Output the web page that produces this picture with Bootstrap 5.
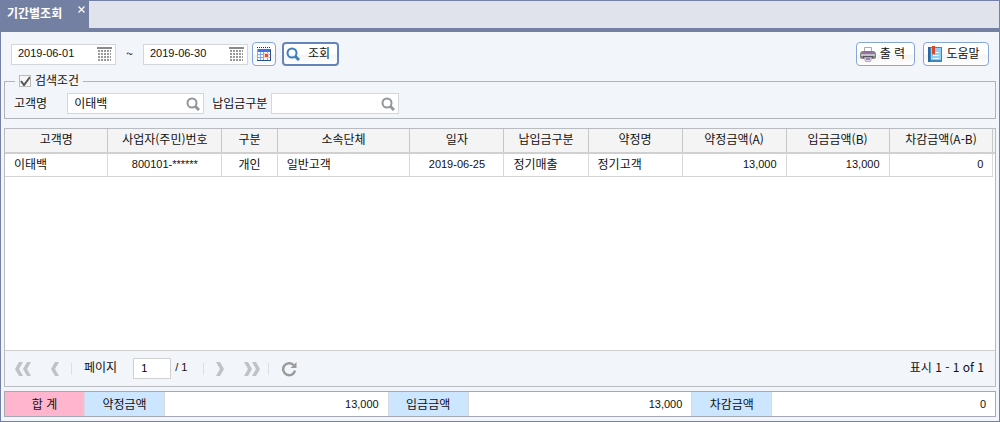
<!DOCTYPE html>
<html lang="ko">
<head>
<meta charset="utf-8">
<meta name="viewport" content="width=device-width, initial-scale=1">
<title>기간별조회</title>
<link href="https://cdn.jsdelivr.net/npm/bootstrap@5.3.0/dist/css/bootstrap.min.css" rel="stylesheet">
<style>
  body { font: 12px/16px "Noto Sans CJK KR", sans-serif; color: #111; background: #f2f5fa; }
  .num { font-family: "Liberation Sans", "Noto Sans CJK KR", sans-serif; font-size: 11px; }
  .frame { border: 1px solid #7480a6; }
  .tabstrip { height: 31px; background: #e0e3ec; border-bottom: 4px solid #7480a2; }
  .tabstrip .page-tab { height: 31px; width: 88px; background: #7480a2; color: #fff; font-weight: 700; padding: 4px 4px 0 6px; }
  .tab-close { border: 0; background: none; color: #fff; padding: 1px 0 0; line-height: 0; }
  .tab-close svg, .tool svg, .field svg, .pager svg { display: block; flex: none; }
  .toolbar { padding: 10px 10px 8px; }
  .field { background: #fff; border: 1px solid #d3d6da; height: 21px; padding: 0 3px 0 6px; }
  .field input { border: 0; outline: 0; background: none; padding: 0 0 2px; min-width: 0; width: 100%; color: #111; line-height: 16px; }
  .date-field { width: 105px; }
  .tilde { width: 27px; text-align: center; padding-bottom: 2px; }
  .icon-btn { border: 0; background: none; padding: 0; }
  .tool { height: 24px; border: 1px solid #86a5d8; border-radius: 4px; background: linear-gradient(#fff 50%, #f4f4f4 55%, #fff); color: #111; padding: 0 5px 0 3px; font-size: 12px; line-height: 16px; }
  .tool span { padding-bottom: 2px; }
  .tool.main { border: 2px solid #6485b9; margin-left: 6px; padding: 0 7px 0 2px; }
  .tool.square { padding: 0 3px; }
  .search-box { margin: 0 3px; padding: 0 9px 4px; border: 1px solid #b1b5b9; }
  .search-box legend { font-size: 12px; line-height: 16px; padding: 0 4px; margin: 0 0 1px 1px; }
  .search-box legend span { margin-top: -2px; }
  .search-box .form-check-input { width: 12px; height: 12px; margin: 1px 0 0; border: 1px solid #bbb; border-radius: 0; background-color: #f6f6f6; }
  .search-box .form-check-input:checked { background-size: 14px; background-image: url("data:image/svg+xml,%3csvg xmlns='http://www.w3.org/2000/svg' viewBox='0 0 14 14'%3e%3cpath d='M3 7l3 4 6-8' fill='none' stroke='%23555' stroke-width='2'/%3e%3c/svg%3e"); }
  .search-box .caption { padding-bottom: 2px; }
  .name-field { width: 137px; }
  .kind-field { width: 128px; }
  .result { margin: 9px 3px 0; border: 1px solid #b8bbc0; background: #fff; }
  .grid-table { table-layout: fixed; width: 100%; margin: 0; }
  .grid-table th { height: 24px; background: #f4f4f4; font-weight: 400; text-align: center; padding: 0 0 3px; border-right: 1px solid #c5c7ca; border-bottom: 2px solid #d0d0d0; }
  .grid-table td { height: 23px; padding: 0 9px 2px; border-right: 1px solid #d9d9d9; border-bottom: 1px solid #d5d5d5; white-space: nowrap; }
  .grid-table th.edge, .grid-table td.edge { border-right: 0; padding: 0; }
  .grid-table td.edge { border-bottom: 0; }
  .pager { height: 36px; background: #f2f5fa; border-top: 1px solid #cfcfcf; padding: 0 11px 0 10px; }
  .pager .txt { padding-bottom: 3px; }
  .pager .nav-btn { width: 20px; height: 20px; }
  .pager .bar { width: 1px; height: 12px; background: #dcdfe4; }
  .pager .page-no { width: 38px; height: 21px; border: 1px solid #d0d0d0; border-radius: 0; background: #fff; padding: 0 0 2px 7px; }
  .totals { margin: 4px 3px; border: 1px solid #a5a8b2; background: #fff; height: 26px; }
  .totals .cap { width: 80px; flex: none; background: #cce6ff; border-right: 1px solid #d6dae0; height: 100%; padding-bottom: 1px; }
  .totals .cap.pink { background: #ffb5cd; }
  .totals .val { flex: 1 1 0; padding: 0 9px; text-align: right; border-right: 1px solid #d6dae0; height: 100%; line-height: 24px; }
  .totals .val:last-child { border: 0; }
</style>
</head>
<body>
<svg width="0" height="0" class="position-absolute" aria-hidden="true">
  <symbol id="cal" viewBox="0 0 15 14"><path d="M0 1h15" stroke="#8b8b8b" stroke-width="2"/><path d="M1 4h13M1 7h13M1 10h13M1 13h13" stroke="#999" stroke-width="2" stroke-dasharray="2 1"/></symbol>
  <symbol id="lens" viewBox="0 0 14 14"><circle cx="6" cy="6" r="4.500" fill="none" stroke="currentColor" stroke-width="2"/><path d="M9 9l4 4" stroke="currentColor" stroke-width="3"/></symbol>
  <symbol id="chev" viewBox="0 0 8 14"><path d="M0 7L4 0h4L4 7l4 7H4z" fill="#bfc2c6"/></symbol>
</svg>
<div class="frame d-flex flex-column min-vh-100">
  <header class="tabstrip d-flex">
    <div class="page-tab d-flex justify-content-between align-items-start">
      <span>기간별조회</span>
      <button class="tab-close" aria-label="닫기"><svg width="7" height="7" viewBox="0 0 7 7"><path d="M.5.5l6 6M6.500.5l-6 6" stroke="#fff" stroke-width="1.200"/></svg></button>
    </div>
  </header>

  <main class="d-flex flex-column flex-grow-1">
    <div class="toolbar d-flex align-items-center">
      <div class="field date-field d-flex align-items-center">
        <input class="num" type="text" value="2019-06-01" aria-label="시작일">
        <button class="icon-btn" aria-label="달력"><svg width="15" height="14"><use href="#cal"/></svg></button>
      </div>
      <span class="tilde">~</span>
      <div class="field date-field d-flex align-items-center">
        <input class="num" type="text" value="2019-06-30" aria-label="종료일">
        <button class="icon-btn" aria-label="달력"><svg width="15" height="14"><use href="#cal"/></svg></button>
      </div>
      <button class="tool square d-flex align-items-center ms-1" aria-label="기간 선택">
        <svg width="16" height="16" viewBox="0 0 16 16"><path fill="#fff" d="M1 2h14v13H1z"/><path fill="#3f75df" d="M1 3h14v3H1z"/><path d="M1 1.500h14" stroke="#333" stroke-dasharray="1 1"/><path d="M1 8.500h14M1 11.500h14M4.500 6v8M7.500 6v8M11.500 6v8M1.500 3v12" stroke="#85aaf0"/><path d="M1 14.500h14M14.500 4v10" stroke="#244f91"/><path fill="#fbd0bf" d="M8 7h5v5H8z"/><path fill="#e8502d" d="M9 8h3v3H9z"/></svg>
      </button>
      <button class="tool main d-flex align-items-center gap-2">
        <svg width="14" height="14" style="color:#3e7fbd"><use href="#lens"/></svg><span>조회</span>
      </button>
      <button class="tool d-flex align-items-center ms-auto me-2 gap-1">
        <svg width="16" height="16" viewBox="0 0 16 16"><path fill="#fff" stroke="#aaa" d="M4.500 1.500h7v5h-7z"/><path fill="#84818b" d="M2 5h2v2h8V5h2l2 2v5l-2 1H2l-2-1V7z"/><path fill="#c3c1c8" d="M1 8h14v2H1z"/><path fill="#976aa6" d="M4 5h8v2H4z"/><path fill="#555" d="M3 10h10v2H3z"/><path fill="#e9dff1" stroke="#aaa" d="M4.500 11.500h7l-1 4h-5z"/><path fill="#a379c5" d="M6 12h4v2H6z"/></svg><span>출 력&nbsp;</span>
      </button>
      <button class="tool d-flex align-items-center gap-1">
        <svg width="16" height="16" viewBox="0 0 16 16"><path fill="#3b87b8" d="M1 1h14v15H1z"/><path fill="#8fd1f4" d="M4 2h10v12H4z"/><path fill="#2867a1" d="M1 1h2v15H1z"/><path fill="#e4f6ff" d="M6 6h6v1H6zM6 9h6v1H6zM6 12h6v1H6z"/><path fill="#e04425" d="M5 0h3v9L6.500 7.500 5 9z"/></svg><span>도움말&nbsp;</span>
      </button>
    </div>

    <fieldset class="search-box">
      <legend class="float-none w-auto"><label class="d-flex gap-1"><input class="form-check-input" type="checkbox" checked><span>검색조건</span></label></legend>
      <div class="d-flex align-items-center pt-1">
        <label for="cust" class="caption me-3 pe-1">고객명</label>
        <div class="field name-field d-flex align-items-center">
          <input id="cust" type="text" value="이태백">
          <button class="icon-btn text-secondary opacity-75" aria-label="고객 찾기"><svg width="14" height="14"><use href="#lens"/></svg></button>
        </div>
        <label for="kind" class="caption ms-2 me-1">납입금구분</label>
        <div class="field kind-field d-flex align-items-center">
          <input id="kind" type="text">
          <button class="icon-btn text-secondary opacity-75" aria-label="구분 찾기"><svg width="14" height="14"><use href="#lens"/></svg></button>
        </div>
      </div>
    </fieldset>

    <section class="result d-flex flex-column flex-grow-1">
      <div class="flex-grow-1">
        <table class="grid-table">
          <colgroup>
            <col style="width:10.4%"><col style="width:11.5%"><col style="width:5.6%"><col style="width:13.4%"><col style="width:9.5%"><col style="width:8.5%"><col style="width:9.5%"><col style="width:10.5%"><col style="width:10.4%"><col style="width:10.5%"><col>
          </colgroup>
          <thead>
            <tr><th>고객명</th><th>사업자(주민)번호</th><th>구분</th><th>소속단체</th><th>일자</th><th>납입금구분</th><th>약정명</th><th>약정금액(A)</th><th>입금금액(B)</th><th>차감금액(A-B)</th><th class="edge"></th></tr>
          </thead>
          <tbody>
            <tr><td>이태백</td><td class="text-center num">800101-******</td><td class="text-center">개인</td><td>일반고객</td><td class="text-center num">2019-06-25</td><td>정기매출</td><td>정기고객</td><td class="text-end num">13,000</td><td class="text-end num">13,000</td><td class="text-end num">0</td><td class="edge"></td></tr>
          </tbody>
        </table>
      </div>
      <nav class="pager d-flex align-items-center" aria-label="페이지">
        <button class="icon-btn nav-btn d-flex align-items-center" aria-label="처음"><svg width="8" height="14"><use href="#chev"/></svg><svg width="8" height="14"><use href="#chev"/></svg></button>
        <button class="icon-btn nav-btn d-flex align-items-center ms-3" aria-label="이전"><svg width="8" height="14"><use href="#chev"/></svg></button>
        <span class="bar"></span>
        <label for="pno" class="txt mx-3 ms-2 ps-1">페이지</label>
        <input id="pno" class="page-no num" type="text" value="1">
        <span class="txt num ms-1">/ 1</span>
        <span class="bar ms-3 me-2"></span>
        <button class="icon-btn nav-btn d-flex align-items-center ms-1" aria-label="다음"><svg width="8" height="14" viewBox="0 0 8 14"><path d="M8 7L4 0H0l4 7-4 7h4z" fill="#bfc2c6"/></svg></button>
        <button class="icon-btn nav-btn d-flex align-items-center ms-2" aria-label="마지막"><svg width="16" height="14" viewBox="0 0 16 14"><path d="M8 7L4 0H0l4 7-4 7h4zM16 7l-4-7H8l4 7-4 7h4z" fill="#bfc2c6"/></svg></button>
        <span class="bar ms-1 me-2"></span>
        <button class="icon-btn ms-1" aria-label="새로고침"><svg width="16" height="16" viewBox="0 0 16 16"><path d="M12.500 4A6 6 0 1 0 14 9.500" fill="none" stroke="#9b9b9b" stroke-width="2.500"/><path d="M15.500 1v6h-6z" fill="#9b9b9b"/></svg></button>
        <span class="txt ms-auto">표시 1 - 1 of 1</span>
      </nav>
    </section>

    <section class="totals d-flex" aria-label="합계">
      <div class="cap pink d-flex align-items-center justify-content-center">합 계</div>
      <div class="cap d-flex align-items-center justify-content-center">약정금액</div>
      <div class="val num">13,000</div>
      <div class="cap d-flex align-items-center justify-content-center">입금금액</div>
      <div class="val num">13,000</div>
      <div class="cap d-flex align-items-center justify-content-center">차감금액</div>
      <div class="val num">0</div>
    </section>
  </main>
</div>
<script src="https://cdn.jsdelivr.net/npm/bootstrap@5.3.0/dist/js/bootstrap.bundle.min.js"></script>
</body>
</html>
